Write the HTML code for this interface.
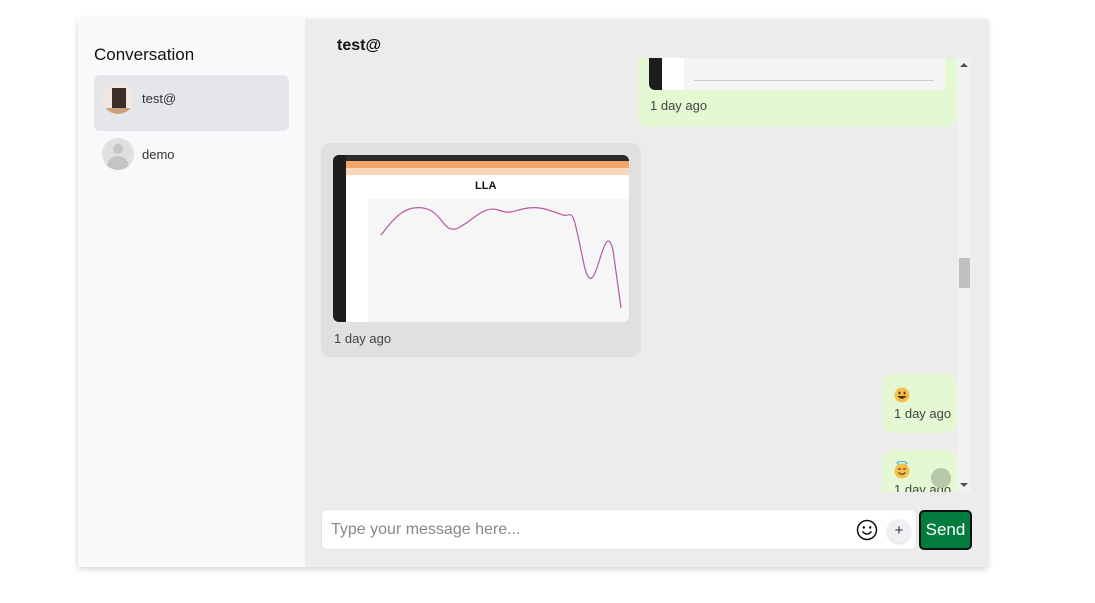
<!DOCTYPE html>
<html><head><meta charset="utf-8"><style>
*{box-sizing:border-box;margin:0;padding:0}
body{width:1095px;height:603px;background:#fff;font-family:"Liberation Sans","DejaVu Sans",sans-serif;position:relative;overflow:hidden}
.card{position:absolute;left:78px;top:19px;width:910px;height:548px;background:#ececec;box-shadow:0 2px 6px rgba(0,0,0,.18)}
.side{position:absolute;left:0;top:0;width:227px;height:548px;background:#f8f9fa}
.abs{position:absolute}
.t{color:#333;font-size:13px}
.bub{position:absolute;border-radius:10px}
</style></head><body>
<div class="card">
 <div class="side">
  <div class="abs" style="left:16px;top:26px;font-size:17px;color:#111">Conversation</div>
  <div class="abs" style="left:16px;top:56px;width:195px;height:56px;background:#e4e6ea;border-radius:6px"></div>
  <div class="abs" style="left:24px;top:63px;width:32px;height:32px;border-radius:50%;background:#f0e8e0;overflow:hidden">
   <div class="abs" style="left:10px;top:6px;width:14px;height:22px;background:#3a2e26"></div>
   <div class="abs" style="left:0;top:26px;width:32px;height:6px;background:#c9a27a"></div>
  </div>
  <div class="abs t" style="left:64px;top:72px">test@</div>
  <div class="abs" style="left:24px;top:119px;width:32px;height:32px;border-radius:50%;background:#e0e0e0;overflow:hidden">
   <div class="abs" style="left:11px;top:6px;width:10px;height:10px;border-radius:50%;background:#c4c4c4"></div>
   <div class="abs" style="left:5px;top:18px;width:22px;height:14px;border-radius:11px 11px 0 0;background:#c4c4c4"></div>
  </div>
  <div class="abs t" style="left:64px;top:128px">demo</div>
 </div>
 <div class="abs" style="left:259px;top:18px;font-size:16px;font-weight:bold;color:#111">test@</div>
 <div class="abs" style="left:227px;top:39px;width:652px;height:434px;overflow:hidden">
  <div class="bub" style="left:333px;top:-20px;width:319px;height:89px;background:#e3f8d3">
   <div class="abs" style="left:11px;top:0;width:296px;height:52px;background:#f5f5f5;border-radius:0 0 6px 6px;overflow:hidden">
    <div class="abs" style="left:0;top:0;width:13px;height:52px;background:#1c1c1c"></div>
    <div class="abs" style="left:13px;top:0;width:22px;height:52px;background:#fff"></div>
    <div class="abs" style="left:45px;top:42px;width:240px;height:1px;background:#ccc"></div>
   </div>
   <div class="abs t" style="left:12px;top:60px;color:#444">1 day ago</div>
  </div>
  <div class="bub" style="left:16px;top:85px;width:320px;height:214px;background:#e0e0e0">
   <div class="abs" style="left:12px;top:12px;width:296px;height:167px;background:#f6f6f6;border-radius:6px;overflow:hidden">
    <div class="abs" style="left:0;top:0;width:296px;height:6px;background:#2a2a2a"></div>
    <div class="abs" style="left:0;top:0;width:13px;height:167px;background:#1c1c1c"></div>
    <div class="abs" style="left:13px;top:6px;width:283px;height:7px;background:#f3a66a"></div>
    <div class="abs" style="left:13px;top:13px;width:283px;height:7px;background:#fad7bb"></div>
    <div class="abs" style="left:13px;top:20px;width:283px;height:24px;background:#fff"></div>
    <div class="abs" style="left:142px;top:25px;font-size:11px;font-weight:bold;color:#111">LLA</div>
    <div class="abs" style="left:13px;top:44px;width:22px;height:123px;background:#fff"></div>
    <svg class="abs" style="left:40px;top:45px" width="250" height="120"><path d="M8 35 C20 20,30 5,50 8 S70 35,85 28 S110 5,125 10 S140 10,155 8 S180 12,190 15 S198 0,210 60 S230 10,240 50 L248 108" fill="none" stroke="#b55aa5" stroke-width="1.2"/></svg>
   </div>
   <div class="abs t" style="left:13px;top:188px;color:#444">1 day ago</div>
  </div>
  <div class="bub" style="left:577px;top:316px;width:75px;height:59px;background:#e3f8d3">
   <svg class="abs" style="left:12px;top:13px" width="16" height="16" viewBox="0 0 16 16"><circle cx="8" cy="8" r="7.5" fill="#f7c04a"/><ellipse cx="5.5" cy="6" rx="1" ry="1.4" fill="#4a2f1a"/><ellipse cx="10.5" cy="6" rx="1" ry="1.4" fill="#4a2f1a"/><path d="M3.5 9 Q8 14.5 12.5 9 Z" fill="#4a2f1a"/></svg>
   <div class="abs t" style="left:12px;top:32px;color:#444">1 day ago</div>
  </div>
  <div class="bub" style="left:577px;top:392px;width:75px;height:59px;background:#e3f8d3">
   <svg class="abs" style="left:12px;top:11px" width="16" height="18" viewBox="0 0 16 18"><ellipse cx="8" cy="2" rx="5" ry="1.5" fill="none" stroke="#3cb4e6" stroke-width="1"/><circle cx="8" cy="10" r="7.5" fill="#f7c04a"/><path d="M4 8.5 Q5.5 7 7 8.5 M9 8.5 Q10.5 7 12 8.5" fill="none" stroke="#4a2f1a" stroke-width="1"/><path d="M4.5 11.5 Q8 15 11.5 11.5" fill="none" stroke="#4a2f1a" stroke-width="1"/></svg>
   <div class="abs t" style="left:12px;top:32px;color:#444">1 day ago</div>
  </div>
  <div class="abs" style="left:626px;top:410px;width:20px;height:20px;border-radius:50%;background:#b7c9a8"></div>
 </div>
 <div class="abs" style="left:879px;top:39px;width:14px;height:434px;background:#f1f1f1"></div>
 <div class="abs" style="left:882px;top:44px;width:0;height:0;border-left:4px solid transparent;border-right:4px solid transparent;border-bottom:4px solid #505050"></div>
 <div class="abs" style="left:882px;top:464px;width:0;height:0;border-left:4px solid transparent;border-right:4px solid transparent;border-top:4px solid #505050"></div>
 <div class="abs" style="left:881px;top:239px;width:11px;height:30px;background:#c1c1c1"></div>
 <div class="abs" style="left:243px;top:490px;width:596px;height:41px;background:#fff;border:1px solid #e2e2e2;border-radius:6px"></div>
 <div class="abs" style="left:253px;top:502px;font-size:16px;color:#888">Type your message here...</div>
 <svg class="abs" style="left:778px;top:500px" width="22" height="22" viewBox="0 0 22 22"><circle cx="11" cy="11" r="9.5" fill="none" stroke="#111" stroke-width="1.5"/><circle cx="7.8" cy="8.5" r="1.2"/><circle cx="14.2" cy="8.5" r="1.2"/><path d="M6.5 12.5 Q11 17.5 15.5 12.5" fill="none" stroke="#111" stroke-width="1.5"/></svg>
 <div class="abs" style="left:809px;top:500px;width:24px;height:24px;border-radius:50%;background:#eef0f3;box-shadow:0 1px 2px rgba(0,0,0,.15);text-align:center;line-height:24px;font-size:15px;color:#333">+</div>
 <div class="abs" style="left:841px;top:491px;width:53px;height:40px;background:#017c3e;border:2px solid #111;border-radius:5px;color:#fff;font-size:17px;text-align:center;line-height:36px">Send</div>
</div>
</body></html>
